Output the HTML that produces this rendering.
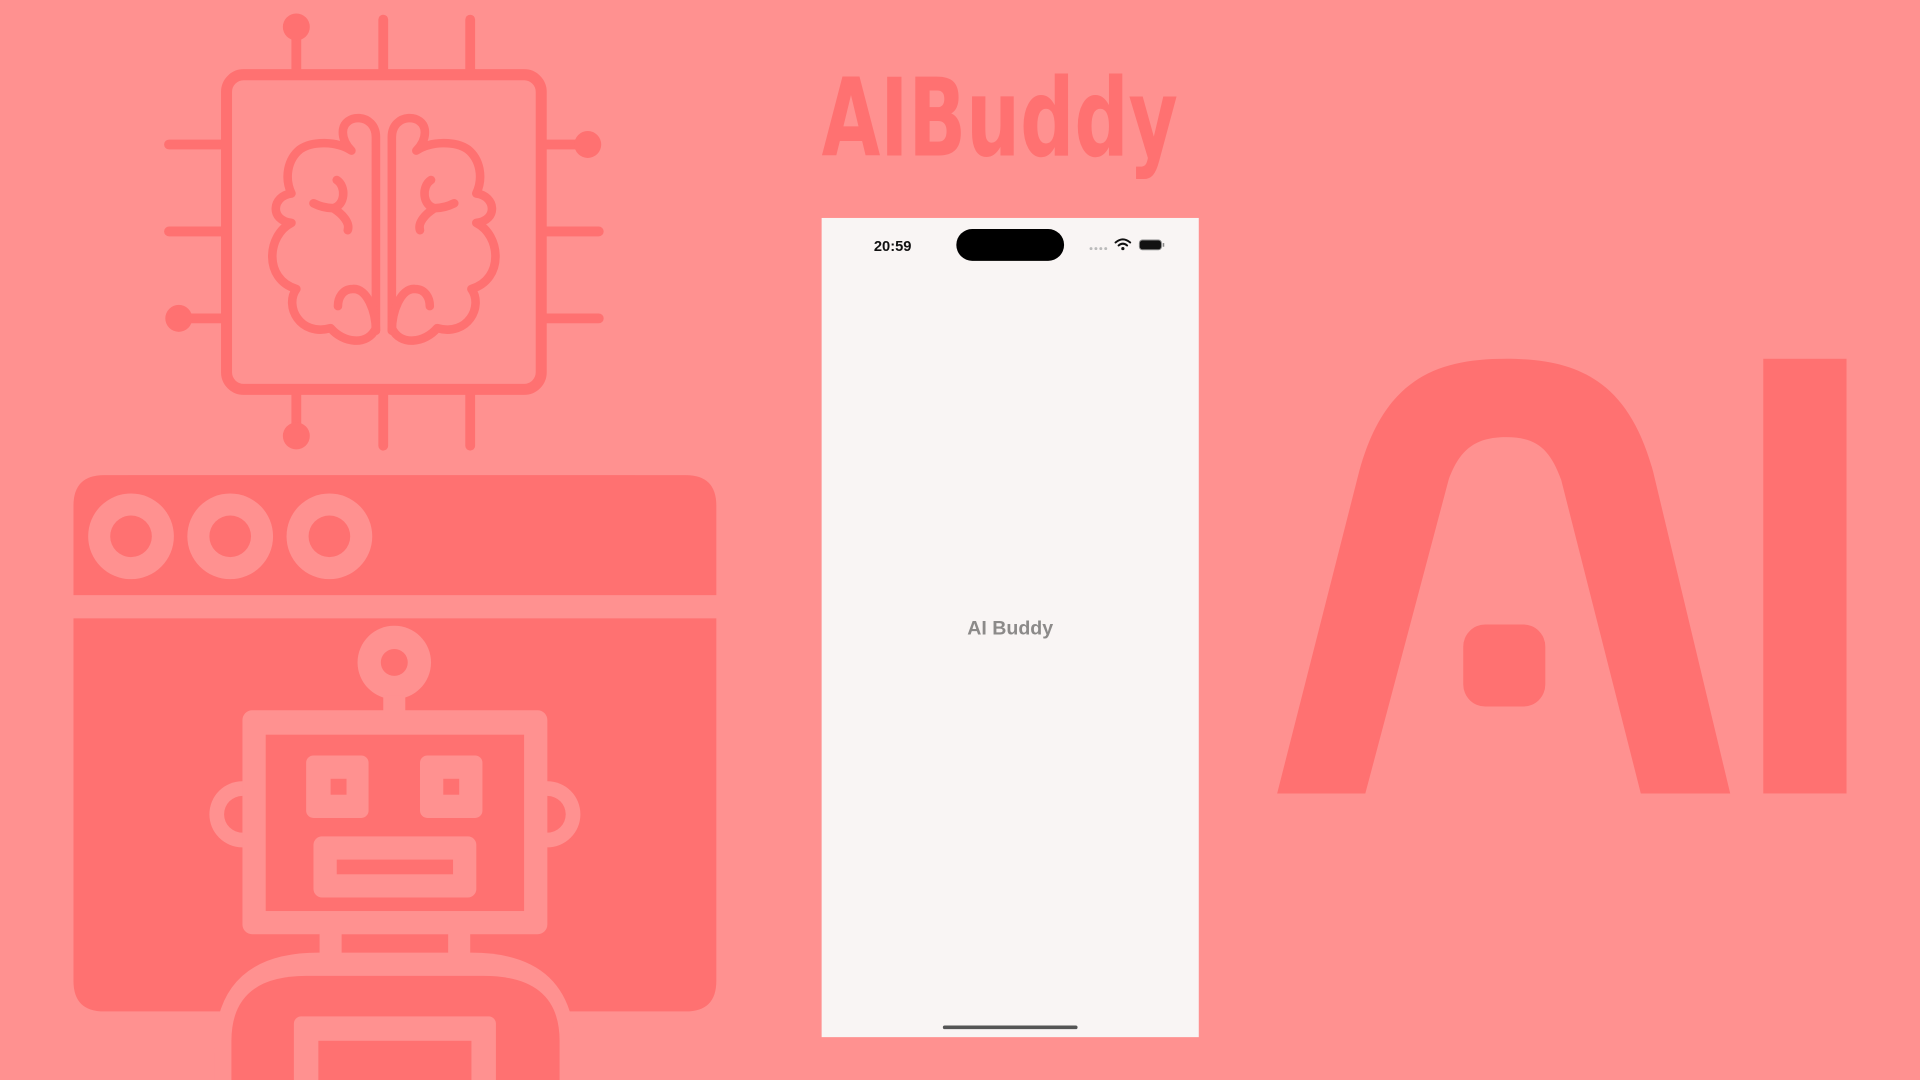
<!DOCTYPE html>
<html><head><meta charset="utf-8"><style>
html,body{margin:0;padding:0;width:1920px;height:1080px;overflow:hidden;background:#ff9190}
svg{display:block}
</style></head><body>
<svg width="1920" height="1080" viewBox="0 0 1568 882" xmlns="http://www.w3.org/2000/svg">
<rect width="1568" height="882" fill="#ff9190"/>
<g fill="#ff7171" stroke="none">
<!-- chip pins -->
<g stroke="#ff7171" stroke-width="8" stroke-linecap="round">
<line x1="242" y1="22" x2="242" y2="60"/><line x1="313" y1="16" x2="313" y2="60"/><line x1="384" y1="16" x2="384" y2="60"/>
<line x1="242" y1="318" x2="242" y2="356"/><line x1="313" y1="318" x2="313" y2="364"/><line x1="384" y1="318" x2="384" y2="364"/>
<line x1="138" y1="118" x2="185" y2="118"/><line x1="138" y1="189" x2="185" y2="189"/><line x1="146" y1="260" x2="185" y2="260"/>
<line x1="442" y1="118" x2="480" y2="118"/><line x1="442" y1="189" x2="489" y2="189"/><line x1="442" y1="260" x2="489" y2="260"/>
</g>
<circle cx="242" cy="22" r="11"/><circle cx="242" cy="356" r="11"/><circle cx="146" cy="260" r="11"/><circle cx="480" cy="118" r="11"/>
<rect x="185" y="61" width="257" height="257" rx="14" fill="none" stroke="#ff7171" stroke-width="9"/>
<!-- brain -->
<g fill="none" stroke="#ff7171" stroke-width="7" stroke-linecap="round" stroke-linejoin="round">
<g id="half">
<path d="M307,270 L307,112 C307,92 280,92 280,108 C280,115 284,120 287,123 C275,115 255,115 245,122 C235,130 232,145 238,158 C222,160 220,180 238,182 C218,192 215,228 242,236 C232,250 245,275 270,268 C280,280 300,283 307,268"/>
<path d="M307,270 C307,255 300,235 288,236 C280,236 276,243 276,250"/>
<path d="M275,147 C283,152 282,168 272,170 C265,170 260,168 256,166 M272,170 C280,175 286,182 284,188"/>
</g>
<use href="#half" transform="translate(627,0) scale(-1,1)"/>
</g>
<!-- browser window -->
<path d="M60,413 Q60,388 85,388 L560,388 Q585,388 585,413 L585,486 L60,486 Z"/>
<path d="M60,505 L585,505 L585,801 Q585,826 560,826 L85,826 Q60,826 60,801 Z"/>
</g>
<g fill="#ff9190">
<circle cx="107" cy="438" r="35"/><circle cx="188" cy="438" r="35"/><circle cx="269" cy="438" r="35"/>
<!-- robot -->
<circle cx="322" cy="541" r="30"/><rect x="313" y="568" width="18" height="14"/>
<circle cx="198" cy="665" r="27"/><circle cx="447" cy="665" r="27"/>
<rect x="198" y="580" width="249" height="183" rx="8"/>
<rect x="261" y="760" width="123" height="20"/>
<path d="M175,882 L175,860 Q175,778 260,778 L385,778 Q470,778 470,860 L470,882 Z"/>
</g>
<g fill="#ff7171">
<circle cx="107" cy="438" r="17"/><circle cx="188" cy="438" r="17"/><circle cx="269" cy="438" r="17"/>
<circle cx="322" cy="541" r="11"/>
<path d="M198,650 a14,14 0 0 0 0,30 Z"/><path d="M447,650 a14,14 0 0 1 0,30 Z"/>
<rect x="217" y="600" width="211" height="144"/>
<rect x="279" y="763" width="87" height="15"/>
<path d="M189,882 L189,850 Q189,797 250,797 L395,797 Q457,797 457,850 L457,882 Z"/>
</g>
<g fill="#ff9190">
<rect x="250" y="617" width="51" height="51" rx="6"/><rect x="343" y="617" width="51" height="51" rx="6"/>
<rect x="256" y="683" width="133" height="50" rx="7"/>
<rect x="240" y="830" width="165" height="60" rx="6"/>
</g>
<g fill="#ff7171">
<rect x="270" y="636" width="13" height="13"/><rect x="362" y="636" width="13" height="13"/>
<rect x="275" y="702" width="95" height="12"/>
<rect x="260" y="850" width="125" height="40"/>
<!-- big AI -->
<path d="M1043,648 L1110,385 C1130,312 1170,293 1230,293 C1290,293 1330,312 1350,385 L1413,648 L1340,648 L1275,392 C1266,367 1255,357 1230,357 C1205,357 1192,367 1183,392 L1115,648 Z"/>
<rect x="1195" y="510" width="67" height="67" rx="18"/>
<rect x="1440" y="293" width="68" height="355"/>
</g>
<text x="671" y="127" font-family="DejaVu Sans Condensed, DejaVu Sans, sans-serif" font-weight="bold" font-size="88" fill="#ff7171" textLength="291" lengthAdjust="spacingAndGlyphs">AIBuddy</text>
<!-- phone -->
<rect x="671" y="178" width="308" height="669" fill="#f9f5f4"/>
<text x="729" y="205" text-anchor="middle" font-family="Liberation Sans, sans-serif" font-weight="bold" font-size="12" fill="#111">20:59</text>
<rect x="781" y="187" width="88" height="26" rx="13" fill="#000"/>
<g fill="#bbb"><circle cx="891" cy="203" r="1.2"/><circle cx="895" cy="203" r="1.2"/><circle cx="899" cy="203" r="1.2"/><circle cx="903" cy="203" r="1.2"/></g>
<g fill="none" stroke="#111" stroke-width="1.6" stroke-linecap="round"><path d="M911,198 Q917,193 923,198"/><path d="M913.5,200.5 Q917,197.5 920.5,200.5"/></g>
<circle cx="917" cy="203" r="1.3" fill="#111"/>
<rect x="930.5" y="196" width="18" height="8" rx="2.5" fill="#111" stroke="#888" stroke-width="0.8"/>
<rect x="949.5" y="198.5" width="1.3" height="3" fill="#888"/>
<text x="825" y="518" text-anchor="middle" font-family="Liberation Sans, sans-serif" font-weight="bold" font-size="16" fill="#8c8a89">AI Buddy</text>
<rect x="770" y="837.5" width="110" height="3" rx="1.5" fill="#555"/>
</svg>
</body></html>
